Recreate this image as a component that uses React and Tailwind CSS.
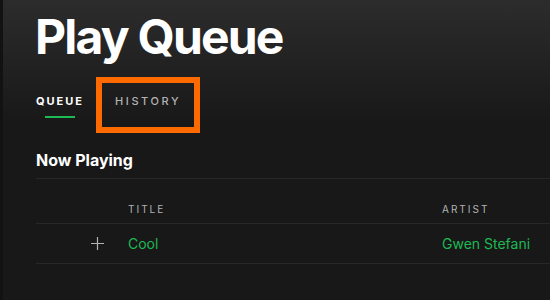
import React from 'react';

export default function App() {
  return (
    <div className="w-[550px] h-[300px] flex overflow-hidden bg-[#181818] font-['Inter',sans-serif]">
      {/* left rail edge */}
      <div className="w-[3px] h-full bg-[#121212] shrink-0" />

      <div className="relative flex-1 flex flex-col bg-[linear-gradient(to_bottom,#2c2c2c_0px,#181818_125px,#181818_300px)]">
        <h1 className="pl-[32px] pt-[9px] text-[48px] leading-[56px] font-bold tracking-[-1.8px] text-white">
          Play Queue
        </h1>

        {/* tabs */}
        <div className="flex pl-[33px] mt-[29px] h-[24px]">
          <div className="flex flex-col items-center">
            <span className="text-[11px] leading-[14px] font-bold tracking-[2px] text-white">QUEUE</span>
            <span className="mt-[8px] w-[30px] h-[2px] bg-[#1db954]" />
          </div>
          <span className="ml-[31px] text-[11px] leading-[14px] font-medium tracking-[2.6px] text-[#b3b3b3]">HISTORY</span>
        </div>

        {/* highlight box */}
        <div className="absolute left-[93px] top-[77px] w-[104px] h-[56px] border-[6px] border-[#ff6a00]" />

        {/* now playing */}
        <div className="ml-[33px] mt-[30px]">
          <h2 className="text-[16px] leading-[24px] font-bold text-white pb-[6px] border-b border-[#282828]">
            Now Playing
          </h2>

          <div className="flex h-[45px] items-end pb-[7px] border-b border-[#282828] text-[10px] leading-[14px] tracking-[2px] text-[#b3b3b3]">
            <span className="ml-[92px] w-[314px]">TITLE</span>
            <span>ARTIST</span>
          </div>

          <div className="flex h-[40px] items-center border-b border-[#282828] text-[14px] text-[#1db954]">
            <span className="w-[92px] flex justify-end pr-[24px]">
              <svg width="13" height="13" viewBox="0 0 13 13" fill="none" stroke="#b3b3b3" strokeWidth="1.2">
                <path d="M6.5 0v13M0 6.5h13" />
              </svg>
            </span>
            <span className="w-[314px]">Cool</span>
            <span>Gwen Stefani</span>
          </div>
        </div>
      </div>
    </div>
  );
}
